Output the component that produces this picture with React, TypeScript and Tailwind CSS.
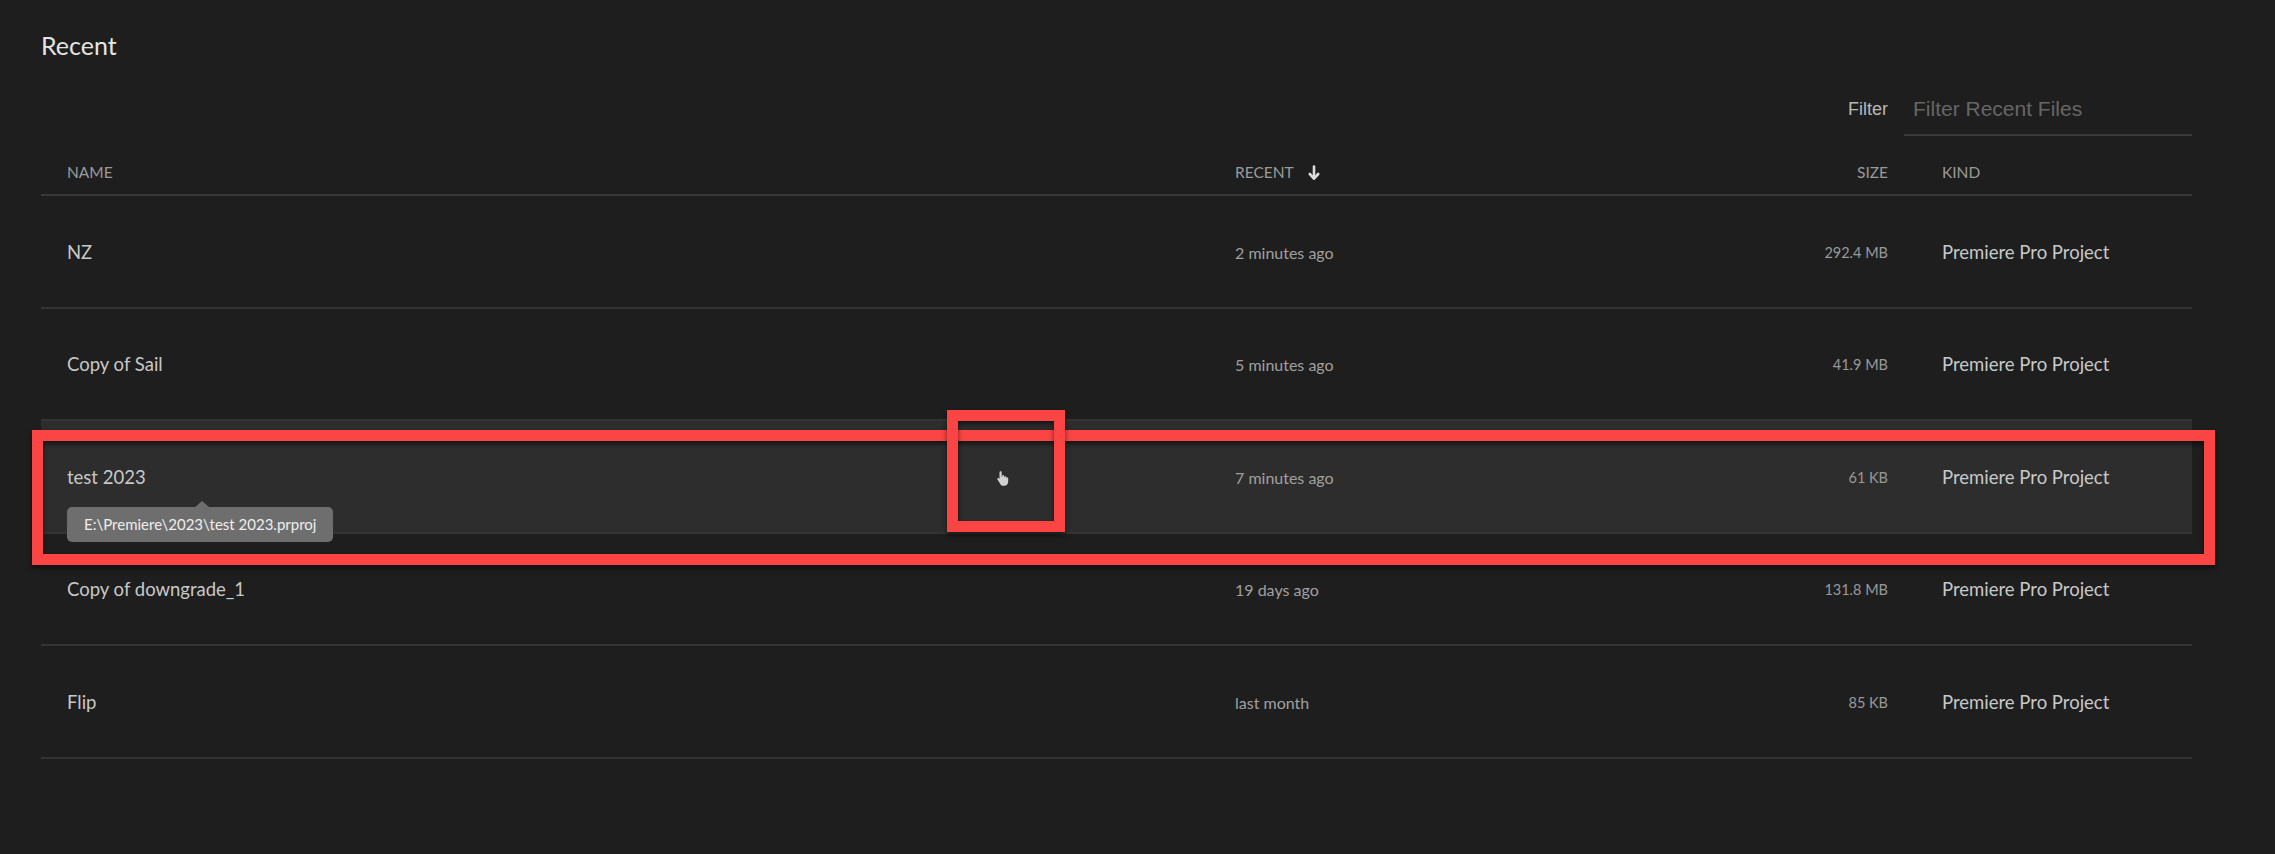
import React from 'react';

interface RecentFile {
  name: string;
  recent: string;
  size: string;
  kind: string;
  path?: string;
}

const FILES: RecentFile[] = [
  { name: 'NZ', recent: '2 minutes ago', size: '292.4 MB', kind: 'Premiere Pro Project' },
  { name: 'Copy of Sail', recent: '5 minutes ago', size: '41.9 MB', kind: 'Premiere Pro Project' },
  {
    name: 'test 2023',
    recent: '7 minutes ago',
    size: '61 KB',
    kind: 'Premiere Pro Project',
    path: 'E:\\Premiere\\2023\\test 2023.prproj',
  },
  { name: 'Copy of downgrade_1', recent: '19 days ago', size: '131.8 MB', kind: 'Premiere Pro Project' },
  { name: 'Flip', recent: 'last month', size: '85 KB', kind: 'Premiere Pro Project' },
];

const GRID = 'grid grid-cols-[1194px_453px_200px_304px] items-center';

function SortArrow() {
  return (
    <svg width="12" height="16" viewBox="0 0 12 16" className="ml-[14px]" aria-hidden>
      <path d="M6 1.5V13" stroke="#dcdcdc" strokeWidth="2.6" strokeLinecap="round" fill="none" />
      <path d="M1.8 9L6 13.6L10.2 9" stroke="#dcdcdc" strokeWidth="2.6" strokeLinecap="round" strokeLinejoin="round" fill="none" />
    </svg>
  );
}

function HandCursor() {
  return (
    <svg width="14" height="16" viewBox="0 0 14 16" aria-hidden>
      <path
        d="M4.6 1.2c.7 0 1.1.5 1.1 1.1V7l.4-.1V6c0-.6.5-1 1-1s1 .4 1 1v1l.3.1c.1-.5.5-.8 1-.8s1 .4 1 1v.6c.2-.3.5-.4.9-.4.5 0 .9.4.9 1v3.2c0 2.3-1.7 4.1-4 4.1H7.4c-1.3 0-2.3-.6-3-1.6L1.5 9.6c-.4-.5-.3-1.1.2-1.4.4-.3 1-.2 1.4.2l.4.5V2.3c0-.6.5-1.1 1.1-1.1z"
        fill="#d0d0d0"
      />
    </svg>
  );
}

function FileRow({ file }: { file: RecentFile }) {
  const hovered = !!file.path;
  return (
    <div
      className={`${GRID} relative h-[112.5px] border-b-2 border-[#333333] pt-[3px] ${hovered ? 'bg-[#2d2d2d]' : ''}`}
    >
      <div className="pl-[26px] text-[18.5px] text-[#c8c8c8]">{file.name}</div>
      <div className="text-[16px] text-[#a0a0a0]">{file.recent}</div>
      <div className="text-right text-[14.5px] text-[#999999]">{file.size}</div>
      <div className="pl-[54px] text-[18.5px] text-[#c8c8c8]">{file.kind}</div>

      {hovered && (
        <>
          {/* path tooltip */}
          <div className="absolute left-[26px] top-[80px] z-10">
            <div className="ml-[128px] h-0 w-0 border-x-[7px] border-b-[6px] border-x-transparent border-b-[#6e6e6e]" />
            <div className="rounded-[5px] bg-[#6e6e6e] px-[17px] py-[6px] text-[15px] leading-[23px] text-[#eeeeee]">
              {file.path}
            </div>
          </div>
          <div className="absolute left-[955px] top-[49px]">
            <HandCursor />
          </div>
        </>
      )}
    </div>
  );
}

export default function App() {
  return (
    <div className="relative min-h-screen w-full overflow-hidden bg-[#1e1e1e] font-['Lato',sans-serif]">
      <div className="pl-[41px] pr-[83px] pt-[30px]">
        <h1 className="text-[25px] leading-[30px] text-[#e4e4e4]">Recent</h1>

        {/* Filter */}
        <div className="mt-[36px] flex justify-end">
          <div className="flex items-start pt-[2px] font-['Liberation_Sans',Arial,sans-serif]">
            <span className="pr-[16px] text-[18px] leading-[22px] text-[#b8b8b8]">Filter</span>
            <input
              type="text"
              placeholder="Filter Recent Files"
              className="-mt-[2px] h-[40px] w-[288px] border-b-2 border-[#3a3a3a] bg-transparent pb-[12px] pl-[9px] text-[21px] leading-[22px] text-[#cccccc] outline-none placeholder:text-[#666666]"
            />
          </div>
        </div>

        {/* Header */}
        <div className={`${GRID} h-[60px] border-b-2 border-[#383838] pt-[16px] text-[15.5px] text-[#9a9a9a]`}>
          <div className="pl-[26px]">NAME</div>
          <div className="flex items-center">
            RECENT
            <SortArrow />
          </div>
          <div className="text-right">SIZE</div>
          <div className="pl-[54px]">KIND</div>
        </div>

        {FILES.map((file) => (
          <FileRow key={file.name} file={file} />
        ))}
      </div>

      {/* annotation boxes */}
      <div className="pointer-events-none absolute left-[32px] top-[430px] h-[135px] w-[2183px] border-[11px] border-[#fb4444] shadow-[0_3px_5px_rgba(0,0,0,0.55),inset_0_3px_5px_rgba(0,0,0,0.55)]" />
      <div className="pointer-events-none absolute left-[947px] top-[410px] h-[122px] w-[118px] border-[11px] border-[#fb4444] shadow-[0_3px_5px_rgba(0,0,0,0.55),inset_0_3px_5px_rgba(0,0,0,0.55)]" />
    </div>
  );
}
